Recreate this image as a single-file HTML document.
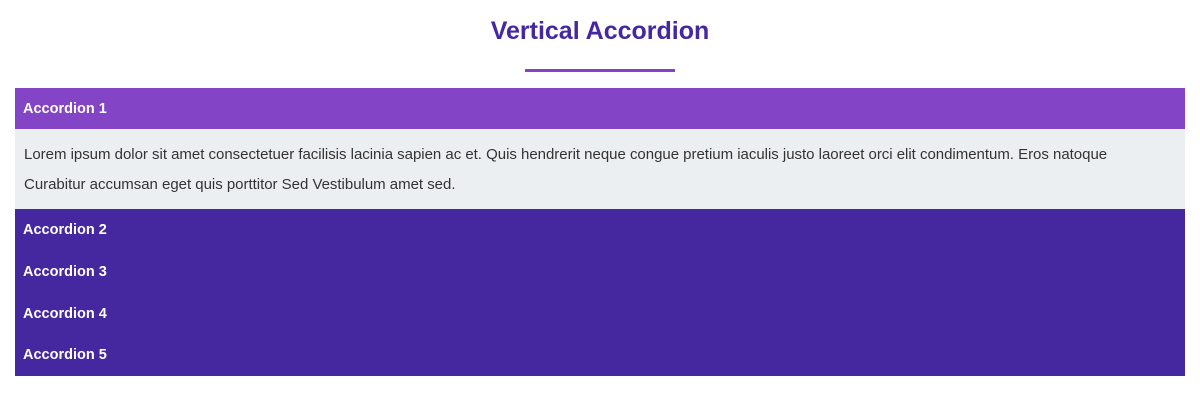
<!DOCTYPE html>
<html><head><style>
body{margin:0;background:#fff;font-family:"Liberation Sans",sans-serif;width:1200px;height:400px;overflow:hidden}
h1{margin:0;position:absolute;top:17px;left:0;width:1200px;text-align:center;font-size:25px;color:#4527a0;font-weight:bold}
.line{position:absolute;left:525px;top:69px;width:150px;height:3px;background:#8444c6}
.acc{position:absolute;left:15px;top:88px;width:1170px}
.h{height:41.75px;line-height:43px;padding-left:8px;color:#fff;font-weight:bold;font-size:14.5px;background:#4527a0}
.h.a{background:#8444c6;height:41px}
.c{background:#eceff1;height:80px;padding:11px 10px 0 9px;box-sizing:border-box;font-size:15px;line-height:30px;color:#333;letter-spacing:-0.02px;white-space:nowrap}
</style></head><body>
<h1>Vertical Accordion</h1>
<div class="line"></div>
<div class="acc">
<div class="h a">Accordion 1</div>
<div class="c">Lorem ipsum dolor sit amet consectetuer facilisis lacinia sapien ac et. Quis hendrerit neque congue pretium iaculis justo laoreet orci elit condimentum. Eros natoque<br>Curabitur accumsan eget quis porttitor Sed Vestibulum amet sed.</div>
<div class="h">Accordion 2</div>
<div class="h">Accordion 3</div>
<div class="h">Accordion 4</div>
<div class="h">Accordion 5</div>
</div>
</body></html>
